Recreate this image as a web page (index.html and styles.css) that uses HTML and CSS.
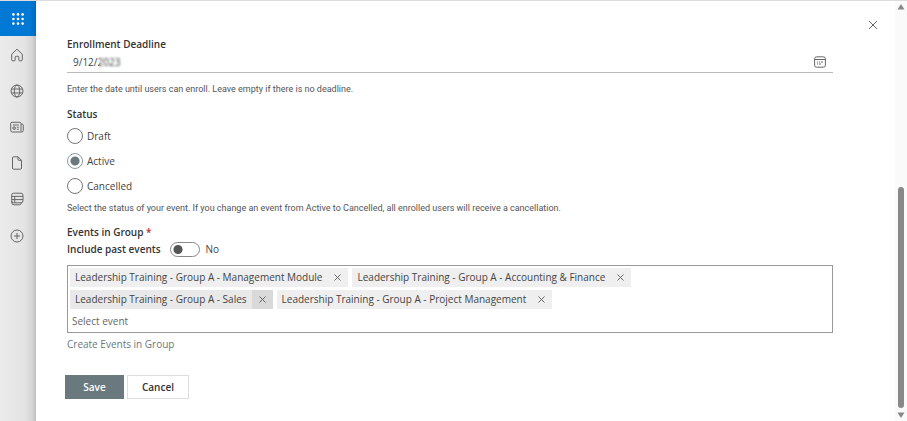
FILE: index.html
```html
<!DOCTYPE html>
<html lang="en">
<head>
    <meta charset="UTF-8">
    <meta name="viewport" content="width=device-width, initial-scale=1.0">
    <title>Edit event group</title>
    <link rel="stylesheet" href="styles.css">
</head>
<body>

    <nav class="app-bar">
        <button type="button" class="launcher" aria-label="App launcher">
            <svg width="12" height="12" viewBox="0 0 12 12">
                <circle cx="1.4" cy="1.4" r="1.3"/><circle cx="6" cy="1.4" r="1.3"/><circle cx="10.6" cy="1.4" r="1.3"/>
                <circle cx="1.4" cy="6" r="1.3"/><circle cx="6" cy="6" r="1.3"/><circle cx="10.6" cy="6" r="1.3"/>
                <circle cx="1.4" cy="10.6" r="1.3"/><circle cx="6" cy="10.6" r="1.3"/><circle cx="10.6" cy="10.6" r="1.3"/>
            </svg>
        </button>
        <a href="#" class="nav-link home" aria-label="Home">
            <svg width="14" height="14" viewBox="0 0 14 14"><path d="M1.7 6.2 7 1.2l5.3 5v5.6q0 1-1 1H9.6q-.8 0-.8-.8V9.2q0-.9-.9-.9H6.1q-.9 0-.9.9V12q0 .8-.8.8H2.7q-1 0-1-1z"/></svg>
        </a>
        <a href="#" class="nav-link" aria-label="Sites">
            <svg width="14" height="14" viewBox="0 0 14 14"><circle cx="7" cy="7" r="6"/><ellipse cx="7" cy="7" rx="2.7" ry="6"/><path d="M1.4 5h11.2M1.4 9h11.2"/></svg>
        </a>
        <a href="#" class="nav-link" aria-label="News">
            <svg width="14" height="14" viewBox="0 0 14 14"><path d="M11 11.5V3.5q0-1.2-1.2-1.2H2Q.7 2.300.7 3.500v7q0 1.500 1.500 1.500h9.600q1.500 0 1.500-1.500V5.200q0-1-1-1H11M3 5h5.800M3 7h2.200v2.200H3zM6.800 7.200h2M6.800 9.200h2"/></svg>
        </a>
        <a href="#" class="nav-link" aria-label="Files">
            <svg width="14" height="14" viewBox="0 0 14 14"><path d="M8 .8H3.700q-1.200 0-1.200 1.200v10q0 1.200 1.200 1.200h6.600q1.200 0 1.200-1.200V4.300zv2.500q0 1 1 1h2.500"/></svg>
        </a>
        <a href="#" class="nav-link" aria-label="Lists">
            <svg width="14" height="14" viewBox="0 0 14 14"><path d="M3.500 1.200H11q2 0 2 2v5.600q0 2-2 2H3.500q-1.800 0-1.800-2V3.200q0-2 1.800-2zM1.700 4.400H13M1.700 7.600H13M4.700 4.400v6.400M1.700 9v1.500q0 2.300 2.300 2.300h5.500q1.500 0 2-2"/></svg>
        </a>
        <a href="#" class="nav-link create" aria-label="Create">
            <svg width="14" height="14" viewBox="0 0 14 14"><circle cx="7" cy="7" r="6"/><path d="M7 4v6M4 7h6"/></svg>
        </a>
    </nav>

    <main class="panel">
        <header class="panel-header">
            <button type="button" class="close" aria-label="Close">
                <svg width="10" height="10" viewBox="0 0 10 10"><path d="M1 1l8 8M9 1l-8 8"/></svg>
            </button>
        </header>

        <form class="event-form">
            <label class="label" for="deadline">Enrollment Deadline</label>
            <div class="date-field">
                <input type="text" id="deadline" value="9/12/2023">
                <span class="year-mask"></span>
                <button type="button" class="calendar" aria-label="Open calendar">
                    <svg width="12" height="12" viewBox="0 0 12 12"><rect x=".6" y=".8" width="10.8" height="10.4" rx="2"/><path d="M.6 3.500h10.800M3 6h1M5 6h1M7 6h2M3 8h1M5 8h2"/></svg>
                </button>
            </div>
            <p class="hint">Enter the date until users can enroll. Leave empty if there is no deadline.</p>

            <fieldset class="status">
                <legend class="label">Status</legend>
                <label class="option"><input type="radio" name="status" value="draft">Draft</label>
                <label class="option"><input type="radio" name="status" value="active" checked>Active</label>
                <label class="option"><input type="radio" name="status" value="cancelled">Cancelled</label>
            </fieldset>
            <p class="hint status-hint">Select the status of your event. If you change an event from Active to Cancelled, all enrolled users will receive a cancellation.</p>

            <label class="label" for="event">Events in Group <span class="required">*</span></label>
            <div class="past-events">
                <label class="label" for="past">Include past events</label>
                <input type="checkbox" id="past" class="toggle" role="switch">
                <span>No</span>
            </div>

            <div class="picker">
                <span class="tag">Leadership Training - Group A - Management Module
                    <button type="button" aria-label="Remove"><svg width="7" height="7" viewBox="0 0 7 7"><path d="M.5.5l6 6M6.500.5l-6 6"/></svg></button>
                </span>
                <span class="tag">Leadership Training - Group A - Accounting &amp; Finance
                    <button type="button" aria-label="Remove"><svg width="7" height="7" viewBox="0 0 7 7"><path d="M.5.5l6 6M6.500.5l-6 6"/></svg></button>
                </span>
                <span class="tag active">Leadership Training - Group A - Sales
                    <button type="button" aria-label="Remove"><svg width="7" height="7" viewBox="0 0 7 7"><path d="M.5.5l6 6M6.500.5l-6 6"/></svg></button>
                </span>
                <span class="tag">Leadership Training - Group A - Project Management
                    <button type="button" aria-label="Remove"><svg width="7" height="7" viewBox="0 0 7 7"><path d="M.5.5l6 6M6.500.5l-6 6"/></svg></button>
                </span>
                <input type="text" id="event" placeholder="Select event">
            </div>
            <a href="#" class="create-link">Create Events in Group</a>

            <div class="actions">
                <button type="submit" class="btn primary">Save</button>
                <button type="button" class="btn">Cancel</button>
            </div>
        </form>
    </main>

    <div class="scrollbar">
        <svg width="8" height="6" viewBox="0 0 8 6"><path d="M4 0l3.500 5.500h-7z"/></svg>
        <div class="track"><div class="thumb"></div></div>
        <svg width="8" height="6" viewBox="0 0 8 6"><path d="M4 6L.5.5h7z"/></svg>
    </div>

</body>
</html>
```

FILE: styles.css
```css
* {
    box-sizing: border-box;
}
body {
    display: flex;
    min-height: 100vh;
    margin: 0;
    border-top: 1px solid #dcdcdc;
    background-color: #fff;
    color: #444;
    font-family: "Open Sans", "Noto Sans", sans-serif;
    font-size: 10px;
    line-height: 16px;
}
button,
input {
    margin: 0;
    padding: 0;
    border: none;
    background: none;
    color: inherit;
    font: inherit;
}
button {
    cursor: pointer;
}
svg {
    display: block;
    fill: none;
    stroke: #666;
}

/* left bar */
.app-bar {
    display: flex;
    flex-direction: column;
    flex: none;
    width: 36px;
    background: linear-gradient(to right, #ebebeb 0, #e4e4e4 24px, #d6d6d6 32px, #bebebe 36px);
}
.launcher {
    display: flex;
    align-items: center;
    justify-content: center;
    height: 35px;
    background: linear-gradient(to right, #0078d4 30px, #0069bb);
}
.launcher svg {
    fill: #fff;
    stroke: none;
}
.nav-link {
    display: flex;
    align-items: center;
    justify-content: center;
    height: 36px;
    padding-right: 2px;
}
.home {
    height: 37px;
}
.create {
    height: 38px;
}

/* panel */
.panel {
    flex: 1;
    min-width: 0;
}
.panel-header {
    display: flex;
    justify-content: flex-end;
    padding: 19px 17px 0 0;
}
.event-form {
    padding: 6px 62px 20px 31px;
}
.label {
    display: block;
    padding: 0;
    color: #333;
    font-weight: 600;
}
.date-field {
    display: flex;
    align-items: center;
    position: relative;
    height: 21px;
    border-bottom: 1px solid #bbb;
}
.date-field input {
    flex: 1;
    padding-left: 6px;
}
.year-mask {
    position: absolute;
    left: 32px;
    top: 3px;
    width: 24px;
    height: 14px;
    backdrop-filter: blur(1px);
}
.calendar {
    margin-right: 7px;
}
.hint {
    margin: 8px 0 9px;
    color: #555;
    font-family: Roboto, "Open Sans", sans-serif;
    font-size: 9px;
}
.status {
    margin: 0;
    padding: 0;
    border: none;
}
.status .label {
    margin-bottom: 1px;
}
.option {
    display: flex;
    align-items: center;
    gap: 4px;
    height: 25px;
}
.option input {
    appearance: none;
    width: 16px;
    height: 16px;
    border: 1px solid #777;
    border-radius: 50%;
}
.option input:checked {
    border-color: #8a9b9e;
    background: radial-gradient(#69797e 4px, transparent 5px);
}
.status-hint {
    margin: 2px 0 8px;
}
.required {
    color: #c4262e;
}
.past-events {
    display: flex;
    align-items: center;
    gap: 6px;
    height: 18px;
    margin-bottom: 7px;
}
.toggle {
    appearance: none;
    width: 30px;
    height: 15px;
    margin-left: 3px;
    border: 1px solid #888;
    border-radius: 8px;
    background: radial-gradient(circle at 7px center, #555 4px, transparent 5px);
}
.picker {
    display: flex;
    flex-wrap: wrap;
    gap: 3px 4px;
    padding: 2px;
    border: 1px solid #999;
}
.tag {
    display: flex;
    height: 19px;
    padding-left: 5px;
    background-color: #efefef;
    line-height: 19px;
}
.tag button {
    display: flex;
    align-items: center;
    justify-content: center;
    width: 21px;
    margin-left: 5px;
}
.tag.active,
.tag:hover {
    background-color: #e9e9e9;
}
.tag.active button {
    background-color: #d9d9d9;
}
.picker input {
    flex: 1 0 100%;
    height: 18px;
    padding-left: 2px;
    outline: none;
}
.picker input::placeholder {
    color: #666;
    opacity: 1;
}
.create-link {
    display: inline-block;
    margin-top: 3px;
    color: #69797e;
    text-decoration: none;
}
.actions {
    display: flex;
    gap: 3px;
    margin: 23px 0 0 -2px;
}
.btn {
    width: 62px;
    height: 24px;
    border: 1px solid #ddd;
    color: #333;
    font-weight: 600;
}
.btn.primary {
    width: 59px;
    border-color: #69797e;
    background-color: #69797e;
    color: #fff;
}

/* scrollbar */
.scrollbar {
    display: flex;
    flex-direction: column;
    align-items: center;
    width: 12px;
    padding: 3px 0;
    background-color: #fafafa;
}
.scrollbar svg {
    fill: #888;
    stroke: none;
}
.track {
    display: flex;
    flex-direction: column;
    justify-content: flex-end;
    flex: 1;
    padding: 4px 0;
}
.thumb {
    width: 6px;
    height: 56%;
    border-radius: 3px;
    background-color: #888;
}
```
